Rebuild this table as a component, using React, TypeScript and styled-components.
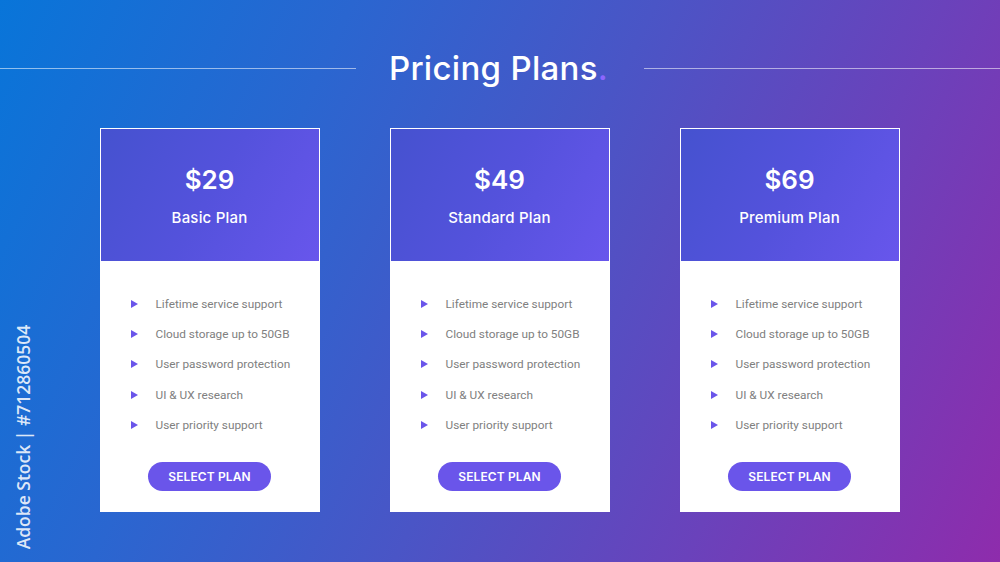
import React from "react";
import styled, { createGlobalStyle } from "styled-components";

const Global = createGlobalStyle`
  html, body { margin: 0; padding: 0; }
  body { font-family: "Roboto", "Liberation Sans", sans-serif; }
  * { box-sizing: border-box; }
`;

const Page = styled.div`
  position: relative;
  width: 1000px;
  height: 562px;
  overflow: hidden;
  background: linear-gradient(115deg, #0875d9 0%, #2a66d0 28%, #4a55c6 52%, #6a42bb 75%, #8e2cac 100%);
  padding-top: 50px;
`;

const TitleRow = styled.div`
  display: flex;
  align-items: center;
  height: 36px;
`;

const Line = styled.div`
  flex: 1;
  height: 1px;
  background: rgba(255, 255, 255, 0.55);
`;

const Title = styled.h1`
  margin: 0 36px 0 33px;
  font-family: "Inter", "Open Sans", sans-serif;
  font-weight: 500;
  font-size: 33px;
  letter-spacing: 0.3px;
  color: #ffffff;
  line-height: 36px;
`;

const Dot = styled.span`
  color: #8d66ff;
`;

const Cards = styled.div`
  display: flex;
  justify-content: center;
  gap: 70px;
  margin-top: 42px;
  padding-right: 1px;
`;

const Card = styled.div`
  width: 220px;
  height: 384px;
  display: flex;
  flex-direction: column;
  background: #ffffff;
  border: 1px solid rgba(255, 255, 255, 0.2);
`;

const CardHead = styled.div`
  height: 132px;
  display: flex;
  flex-direction: column;
  align-items: center;
  background: linear-gradient(120deg, #4552cf 0%, #5452dc 50%, #6856ec 100%);
  color: #ffffff;
  font-family: "Inter", "Open Sans", sans-serif;
  padding-top: 36px;
`;

const Price = styled.div`
  font-size: 26px;
  font-weight: 600;
  line-height: 30px;
`;

const PlanName = styled.div`
  margin-top: 14px;
  font-size: 15px;
  font-weight: 500;
  line-height: 18px;
  letter-spacing: 0.2px;
`;

const Body = styled.div`
  flex: 1;
  display: flex;
  flex-direction: column;
  align-items: center;
  padding: 28px 0 20px;
`;

const List = styled.ul`
  list-style: none;
  margin: 0;
  padding: 0 0 0 29px;
  align-self: stretch;
`;

const Item = styled.li`
  display: flex;
  align-items: center;
  height: 30.3px;
  font-size: 11.8px;
  color: #808080;
`;

const Tri = styled.span`
  width: 0;
  height: 0;
  border-top: 4px solid transparent;
  border-bottom: 4px solid transparent;
  border-left: 7px solid #6a55ea;
  margin-right: 18px;
  margin-left: 1px;
`;

const Button = styled.button`
  margin-top: 22px;
  width: 123px;
  height: 29px;
  border: none;
  border-radius: 15px;
  background: #6a55ea;
  color: #ffffff;
  font-family: "Inter", "Open Sans", sans-serif;
  font-weight: 600;
  font-size: 12px;
  letter-spacing: 0.1px;
  cursor: pointer;
`;

const Credit = styled.div`
  position: absolute;
  left: 23px;
  top: 437px;
  transform: translate(-50%, -50%) rotate(-90deg);
  white-space: nowrap;
  font-family: "Open Sans", sans-serif;
  font-weight: 600;
  font-size: 17.5px;
  color: rgba(255, 255, 255, 0.85);
`;

const features = [
  "Lifetime service support",
  "Cloud storage up to 50GB",
  "User password protection",
  "UI & UX research",
  "User priority support",
];

const plans = [
  { price: "$29", name: "Basic Plan" },
  { price: "$49", name: "Standard Plan" },
  { price: "$69", name: "Premium Plan" },
];

export default function App() {
  return (
    <Page>
      <Global />
      <TitleRow>
        <Line />
        <Title>
          Pricing Plans<Dot>.</Dot>
        </Title>
        <Line />
      </TitleRow>
      <Cards>
        {plans.map((p) => (
          <Card key={p.name}>
            <CardHead>
              <Price>{p.price}</Price>
              <PlanName>{p.name}</PlanName>
            </CardHead>
            <Body>
              <List>
                {features.map((f) => (
                  <Item key={f}>
                    <Tri />
                    {f}
                  </Item>
                ))}
              </List>
              <Button>SELECT PLAN</Button>
            </Body>
          </Card>
        ))}
      </Cards>
      <Credit>Adobe Stock | #712860504</Credit>
    </Page>
  );
}
